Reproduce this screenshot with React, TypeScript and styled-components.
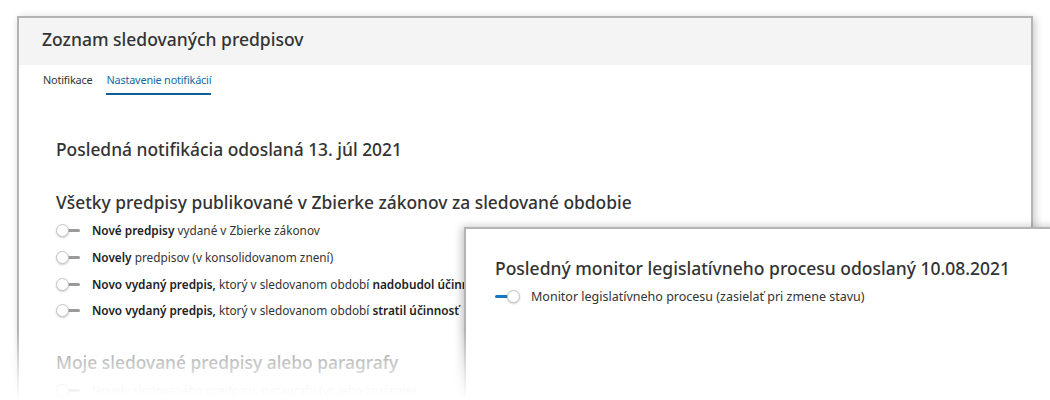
import * as React from "react"
import styled, { createGlobalStyle } from "styled-components"

const GlobalStyle = createGlobalStyle`
    html, body {
        margin: 0;
        padding: 0;
        background: #ffffff;
    }
    body {
        font-family: "Noto Sans", "Liberation Sans", sans-serif;
        color: #333333;
    }
`

const Stage = styled.div`
    position: relative;
    width: 1050px;
    height: 400px;
    overflow: hidden;
    background: #ffffff;
`

const Window = styled.div`
    margin: 16px 0 0 17px;
    width: 1012px;
    height: 400px;
    border: 2px solid #b4b4b4;
    background: #ffffff;
    box-shadow: 2px 2px 8px rgba(0, 0, 0, 0.22);
`

const Header = styled.div`
    height: 47px;
    box-sizing: border-box;
    padding: 0 0 5px 23px;
    background: #f4f4f4;
    display: flex;
    align-items: center;
    font-size: 17.5px;
    font-weight: 500;
    color: #333333;
`

const Tabs = styled.div`
    display: flex;
    gap: 14px;
    padding-left: 24px;
`

const Tab = styled.div<{ $active?: boolean }>`
    font-size: 10.9px;
    letter-spacing: -0.2px;
    line-height: 27px;
    padding-top: 1px;
    color: ${p => (p.$active ? "#1668a6" : "#333333")};
    border-bottom: 2px solid ${p => (p.$active ? "#0d5e98" : "transparent")};
`

const Content = styled.div`
    padding: 41px 0 0 37px;
`

const Heading = styled.div<{ $gap?: number; $muted?: boolean }>`
    font-size: 17.4px;
    font-weight: 500;
    line-height: 26px;
    color: ${p => (p.$muted ? "#8a8a8a" : "#333333")};
    margin-top: ${p => p.$gap ?? 0}px;
    margin-bottom: 2px;
    white-space: nowrap;
`

const Row = styled.div<{ $muted?: boolean; $size?: number }>`
    display: flex;
    align-items: center;
    gap: 12px;
    height: 26.7px;
    font-size: ${p => p.$size ?? 11.8}px;
    white-space: nowrap;
    color: ${p => (p.$muted ? "#d0d0d0" : "#333333")};

    b {
        font-weight: 600;
        color: ${p => (p.$muted ? "#d0d0d0" : "#222222")};
    }
`

const Switch = styled.span<{ $on?: boolean }>`
    position: relative;
    flex: none;
    width: 24px;
    height: 14px;

    &::before {
        content: "";
        position: absolute;
        top: 6px;
        left: ${p => (p.$on ? "0" : "10px")};
        width: 14px;
        height: 3px;
        border-radius: 2px;
        background: ${p => (p.$on ? "#1776c0" : "#9a9a9a")};
    }

    &::after {
        content: "";
        position: absolute;
        top: 1px;
        left: ${p => (p.$on ? "12px" : "0")};
        width: 11px;
        height: 11px;
        border-radius: 50%;
        background: #ffffff;
        border: 1px solid #c4c4c4;
        box-shadow: 0 1px 2px rgba(0, 0, 0, 0.2);
    }
`

const Popup = styled.div`
    position: absolute;
    left: 464px;
    top: 227px;
    width: 620px;
    height: 200px;
    border: 2px solid #b4b4b4;
    background: #ffffff;
    box-shadow: -2px 0 8px rgba(0, 0, 0, 0.25);
    padding: 26px 0 0 29px;
`

const PopupTitle = styled.div`
    font-size: 17.5px;
    font-weight: 500;
    line-height: 26px;
    color: #333333;
    white-space: nowrap;
    margin-bottom: 2px;
`

const Fade = styled.div`
    position: absolute;
    left: 0;
    right: 0;
    bottom: 0;
    height: 70px;
    background: linear-gradient(to bottom, rgba(255, 255, 255, 0) 0%, rgba(255, 255, 255, 0.75) 70%, #ffffff 100%);
    pointer-events: none;
`

const rows = [
    <><b>Nové predpisy</b> vydané v Zbierke zákonov</>,
    <><b>Novely</b> predpisov (v konsolidovanom znení)</>,
    <><b>Novo vydaný predpis,</b> ktorý v sledovanom období <b>nadobudol účinnosť</b></>,
    <><b>Novo vydaný predpis,</b> ktorý v sledovanom období <b>stratil účinnosť</b></>
]

export default function App() {
    return (
        <Stage>
            <GlobalStyle />
            <Window>
                <Header>Zoznam sledovaných predpisov</Header>
                <Tabs>
                    <Tab>Notifikace</Tab>
                    <Tab $active>Nastavenie notifikácií</Tab>
                </Tabs>
                <Content>
                    <Heading>Posledná notifikácia odoslaná 13. júl 2021</Heading>
                    <Heading $gap={27}>Všetky predpisy publikované v Zbierke zákonov za sledované obdobie</Heading>
                    {rows.map((r, i) => (
                        <Row key={i}>
                            <Switch />
                            <span>{r}</span>
                        </Row>
                    ))}
                    <Heading $gap={25} $muted>Moje sledované predpisy alebo paragrafy</Heading>
                    <Row $muted>
                        <Switch />
                        <span>Novely sledovaného predpisu, paragrafu (vr. jeho zrušenie)</span>
                    </Row>
                </Content>
            </Window>
            <Popup>
                <PopupTitle>Posledný monitor legislatívneho procesu odoslaný 10.08.2021</PopupTitle>
                <Row $size={12.5}>
                    <Switch $on />
                    <span>Monitor legislatívneho procesu (zasielať pri zmene stavu)</span>
                </Row>
            </Popup>
            <Fade />
        </Stage>
    )
}
